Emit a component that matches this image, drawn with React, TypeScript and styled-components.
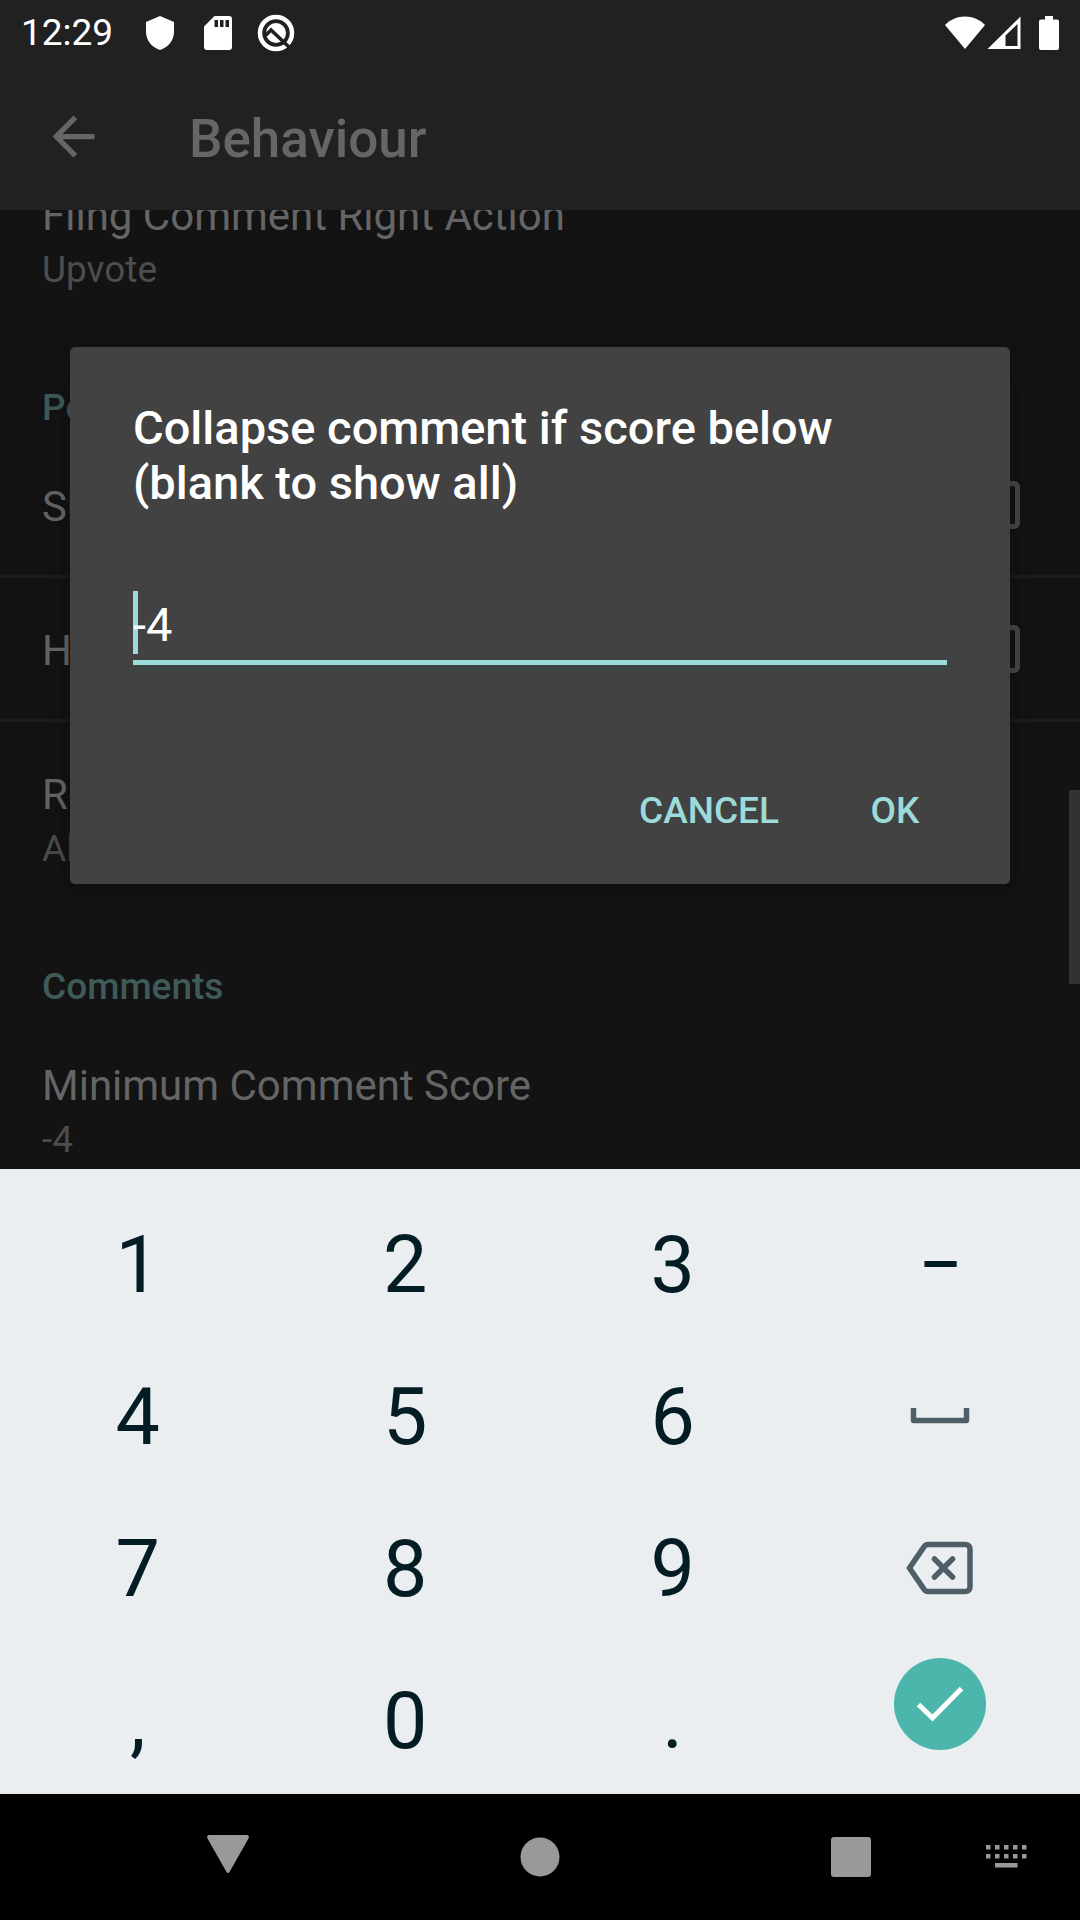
import React, { useState } from "react";
import styled, { createGlobalStyle } from "styled-components";

const accent = "#9cdbd9";

const GlobalStyle = createGlobalStyle`
  *, *::before, *::after { box-sizing: border-box; }
  body {
    margin: 0;
    background: #131313;
    font-family: Roboto, "Noto Sans", "Liberation Sans", sans-serif;
  }
  button {
    margin: 0;
    padding: 0;
    border: 0;
    background: none;
    color: inherit;
    font: inherit;
    cursor: pointer;
  }
  svg { display: block; flex: none; }
`;

const Screen = styled.div`
  display: flex;
  flex-direction: column;
  height: 100vh;
`;

const AppArea = styled.div`
  position: relative;
  flex: 1;
  min-height: 0;
  display: flex;
  flex-direction: column;
  background: #131313;
`;

const StatusBar = styled.header`
  flex: none;
  height: 63px;
  padding: 2px 21px 0;
  display: flex;
  align-items: center;
  justify-content: space-between;
  background: #212121;
  color: #fff;
  font-size: 37px;
  line-height: 43px;
`;

const StatusGroup = styled.div`
  display: flex;
  align-items: center;
  gap: 2px;
`;

const NotificationIcons = styled.div`
  display: grid;
  grid-template-columns: repeat(3, 58px);
  place-items: center;
  margin-left: 16px;
`;

const BatterySlot = styled.span`
  margin-left: 16px;
`;

const Toolbar = styled.div`
  flex: none;
  height: 147px;
  padding: 0 42px;
  display: flex;
  align-items: center;
  gap: 84px;
  background: #212121;
  color: #666;
`;

const ToolbarTitle = styled.h1`
  margin: 0;
  padding-top: 5px;
  font-size: 53px;
  line-height: 61px;
  font-weight: 500;
`;

const ListViewport = styled.main`
  position: relative;
  flex: 1;
  min-height: 0;
  overflow: hidden;
`;

/* The list is scrolled part of the way through its first row. */
const List = styled.div`
  margin-top: -67px;
`;

const ScrollThumb = styled.div`
  position: absolute;
  top: 580px;
  right: 0;
  width: 11px;
  height: 194px;
  background: #323232;
`;

const Category = styled.h2`
  margin: 0;
  padding: 53px 42px 5px;
  color: #3f5a59;
  font-size: 37px;
  line-height: 43px;
  font-weight: 500;
`;

const Preference = styled.div`
  padding: 48px 42px 42px;
  display: flex;
  flex-direction: column;
  gap: 8px;
`;

const PreferenceTitle = styled.span`
  color: #656565;
  font-size: 42px;
  line-height: 49px;
`;

const PreferenceSummary = styled.span`
  color: #4d4d4d;
  font-size: 37px;
  line-height: 43px;
`;

const CheckPreference = styled.label`
  height: 144px;
  padding: 0 60px 0 42px;
  display: flex;
  align-items: center;
  justify-content: space-between;
  border-bottom: 3px solid #1c1c1c;

  ${PreferenceTitle} { padding-top: 4px; }
`;

const Checkbox = styled.input`
  appearance: none;
  width: 48px;
  height: 48px;
  margin: 0;
  border: 5px solid #474747;
  border-radius: 6px;
`;

const DialogLayer = styled.div`
  position: absolute;
  inset: 0;
  padding: 61px 70px 0;
  display: flex;
  align-items: center;
`;

const Dialog = styled.form`
  flex: 1;
  padding: 53px 0 10px;
  border-radius: 5px;
  background: #424242;
  box-shadow: 0 16px 44px rgba(0, 0, 0, 0.18), 0 2px 10px rgba(0, 0, 0, 0.14);
`;

const DialogTitle = styled.label`
  display: block;
  padding: 0 63px;
  color: #fff;
  font-size: 47px;
  line-height: 55px;
  font-weight: 500;
`;

const Field = styled.div`
  position: relative;
  margin: 81px 63px 83px;
`;

const Caret = styled.span`
  position: absolute;
  top: 0;
  left: 0;
  width: 5px;
  height: 63px;
  background: ${accent};
`;

const ScoreInput = styled.input`
  position: relative;
  display: block;
  width: 100%;
  height: 74px;
  padding: 0 0 2px;
  border: 0;
  border-bottom: 5px solid ${accent};
  border-radius: 0;
  outline: 0;
  background: transparent;
  box-shadow: 0 5px 0 #3d4444;
  color: #fff;
  font-family: inherit;
  font-size: 47px;
  line-height: 55px;
  caret-color: transparent;
`;

const DialogActions = styled.div`
  padding-right: 31px;
  display: flex;
  justify-content: flex-end;
  gap: 11px;
`;

const ActionButton = styled.button`
  && {
    min-width: 168px;
    height: 126px;
    padding: 0 21px;
    color: ${accent};
    font-size: 37px;
    line-height: 43px;
    font-weight: 500;
  }
`;

const Keyboard = styled.section`
  flex: none;
  padding: 17px 6px 0 4px;
  display: grid;
  grid-template-columns: repeat(4, 1fr);
  grid-auto-rows: 152px;
  background: #eaeef1;
`;

const Key = styled.button`
  && {
    padding-top: 6px;
    display: flex;
    align-items: center;
    justify-content: center;
    color: #041c24;
    font-size: 79px;
    line-height: 93px;
  }
`;

const IconKey = styled(Key)`
  && {
    padding-top: 4px;
    color: #4e5f67;
  }
`;

const EnterKey = styled(Key)`
  && { padding: 0 0 28px; }
`;

const EnterDisc = styled.span`
  width: 92px;
  height: 92px;
  display: grid;
  place-items: center;
  border-radius: 50%;
  background: #4cb6ac;
`;

const NavBar = styled.nav`
  flex: none;
  height: 126px;
  display: grid;
  grid-template-columns: 146px 164px 1fr 164px 147px;
  background: #000;
  color: #999;
`;

const NavButton = styled.button<{ $column: number }>`
  grid-column: ${(p) => p.$column};
  display: grid;
  place-items: center;
`;

const ShieldIcon = () => (
  <svg width="28" height="34" viewBox="0 0 28 34" fill="currentColor" aria-hidden="true">
    <path d="M14 0 28 6v10c0 8.500-6 15.500-14 18C6 31.500 0 24.500 0 16V6z" />
  </svg>
);

const SdCardIcon = () => (
  <svg width="28" height="34" viewBox="0 0 28 34" aria-hidden="true">
    <path fill="currentColor" d="M10.500 0H25a3 3 0 0 1 3 3v28a3 3 0 0 1-3 3H3a3 3 0 0 1-3-3V10.500z" />
    <path fill="#212121" d="M10.500 4h3.500v7h-3.500zM16 4h3.500v7H16zM21.500 4H25v7h-3.500z" />
  </svg>
);

const QIcon = () => (
  <svg width="38" height="38" viewBox="0 0 38 38" fill="none" aria-hidden="true">
    <circle cx="19" cy="19" r="16" stroke="currentColor" strokeWidth="4.500" />
    <circle cx="19" cy="19" r="10" fill="currentColor" />
    <path d="m8.500 21.500 5.500-5.500 18 17" stroke="#212121" strokeWidth="3.500" />
  </svg>
);

const WifiIcon = () => (
  <svg width="40" height="34" viewBox="0 0 40 34" fill="currentColor" aria-hidden="true">
    <path d="M20 33 0 9C5.500 3.500 12 0.500 20 0.500S34.500 3.500 40 9z" />
  </svg>
);

const SignalIcon = () => (
  <svg width="34" height="34" viewBox="0 0 34 34" fill="currentColor" fillRule="evenodd" aria-hidden="true">
    <path d="M33.500 0.500v32.500H0.500zM30.500 8 18.500 19.500V30h12z" />
  </svg>
);

const BatteryIcon = () => (
  <svg width="20" height="34" viewBox="0 0 20 34" fill="currentColor" aria-hidden="true">
    <path d="M6 0h8v3.500h4a2 2 0 0 1 2 2V32a2 2 0 0 1-2 2H2a2 2 0 0 1-2-2V5.500a2 2 0 0 1 2-2h4z" />
  </svg>
);

const BackArrowIcon = () => (
  <svg width="63" height="63" viewBox="0 0 24 24" fill="currentColor" aria-hidden="true">
    <path d="M20 11H7.830l5.590-5.590L12 4l-8 8 8 8 1.410-1.410L7.830 13H20v-2z" />
  </svg>
);

const SpaceIcon = () => (
  <svg width="60" height="16" viewBox="0 0 60 16" fill="none" aria-hidden="true">
    <path d="M3.500 2.500v10h53V2.500" stroke="currentColor" strokeWidth="5.500" strokeLinecap="square" strokeLinejoin="round" />
  </svg>
);

const BackspaceIcon = () => (
  <svg width="68" height="54" viewBox="0 0 68 54" fill="none" stroke="currentColor" strokeWidth="5.500" aria-hidden="true">
    <path d="M22 3.500h37.500a4.500 4.500 0 0 1 4.500 4.500v38a4.500 4.500 0 0 1-4.500 4.500H22q-2.300 0-3.700-1.900L3.500 27 18.300 5.400Q19.700 3.500 22 3.500z" />
    <path d="m28.500 18 18 18m0-18-18 18" strokeLinecap="round" />
  </svg>
);

const CheckIcon = () => (
  <svg width="48" height="36" viewBox="0 0 48 36" fill="none" stroke="#fff" strokeWidth="5" aria-hidden="true">
    <path d="M2.500 18.500 16.500 32 45.500 2.500" />
  </svg>
);

const NavBackIcon = () => (
  <svg width="42" height="46" viewBox="0 0 42 46" fill="currentColor" aria-hidden="true">
    <path d="M1.500 1h39q2 1 1 3.500L22.500 38q-1.500 2-3 0L.5 4.500Q-.5 2 1.500 1z" />
  </svg>
);

const NavHomeIcon = () => (
  <svg width="40" height="40" viewBox="0 0 40 40" fill="currentColor" aria-hidden="true">
    <circle cx="20" cy="20" r="19.500" />
  </svg>
);

const NavRecentsIcon = () => (
  <svg width="40" height="40" viewBox="0 0 40 40" fill="currentColor" aria-hidden="true">
    <rect width="40" height="40" rx="3" />
  </svg>
);

const KeyboardIcon = () => (
  <svg width="41" height="24" viewBox="0 0 41 24" fill="currentColor" aria-hidden="true">
    {[0, 9].map((y) =>
      [0, 9, 18, 27, 36].map((x) => (
        <rect key={`${x}-${y}`} x={x} y={y} width="4.500" height="4.500" />
      ))
    )}
    <rect x="9" y="18" width="22.500" height="4.500" />
  </svg>
);

type CheckRowProps = { id: string; title: string };

const CheckRow = ({ id, title }: CheckRowProps) => (
  <CheckPreference htmlFor={id}>
    <PreferenceTitle>{title}</PreferenceTitle>
    <Checkbox id={id} type="checkbox" />
  </CheckPreference>
);

type PreferenceRowProps = { title: string; summary: string };

const PreferenceRow = ({ title, summary }: PreferenceRowProps) => (
  <Preference>
    <PreferenceTitle>{title}</PreferenceTitle>
    <PreferenceSummary>{summary}</PreferenceSummary>
  </Preference>
);

export default function App() {
  const [score, setScore] = useState("-4");
  const type = (text: string) => () => setScore((s) => s + text);
  const textKey = (text: string) => (
    <Key type="button" onClick={type(text)}>{text}</Key>
  );

  return (
    <>
      <GlobalStyle />
      <Screen>
        <AppArea>
          <StatusBar>
            <StatusGroup>
              <time>12:29</time>
              <NotificationIcons>
                <ShieldIcon />
                <SdCardIcon />
                <QIcon />
              </NotificationIcons>
            </StatusGroup>
            <StatusGroup>
              <WifiIcon />
              <SignalIcon />
              <BatterySlot><BatteryIcon /></BatterySlot>
            </StatusGroup>
          </StatusBar>
          <Toolbar>
            <button type="button" aria-label="Navigate up"><BackArrowIcon /></button>
            <ToolbarTitle>Behaviour</ToolbarTitle>
          </Toolbar>
          <ListViewport>
            <List>
              <PreferenceRow title="Fling Comment Right Action" summary="Upvote" />
              <Category>Posts</Category>
              <CheckRow id="show-read" title="Show Read" />
              <CheckRow id="hide-nsfw" title="Hide NSFW" />
              <PreferenceRow title="Row Style" summary="Always" />
              <Category>Comments</Category>
              <PreferenceRow title="Minimum Comment Score" summary="-4" />
            </List>
            <ScrollThumb />
          </ListViewport>
          <DialogLayer>
            <Dialog role="dialog" aria-modal="true" onSubmit={(e) => e.preventDefault()}>
              <DialogTitle htmlFor="score">Collapse comment if score below (blank to show all)</DialogTitle>
              <Field>
                <Caret />
                <ScoreInput id="score" type="text" value={score} onChange={(e) => setScore(e.target.value)} />
              </Field>
              <DialogActions>
                <ActionButton type="button">CANCEL</ActionButton>
                <ActionButton type="submit">OK</ActionButton>
              </DialogActions>
            </Dialog>
          </DialogLayer>
        </AppArea>
        <Keyboard aria-label="Keyboard">
          {textKey("1")}
          {textKey("2")}
          {textKey("3")}
          {textKey("−")}
          {textKey("4")}
          {textKey("5")}
          {textKey("6")}
          <IconKey type="button" aria-label="Space" onClick={type(" ")}><SpaceIcon /></IconKey>
          {textKey("7")}
          {textKey("8")}
          {textKey("9")}
          <IconKey type="button" aria-label="Backspace" onClick={() => setScore((s) => s.slice(0, -1))}>
            <BackspaceIcon />
          </IconKey>
          {textKey(",")}
          {textKey("0")}
          {textKey(".")}
          <EnterKey type="button" aria-label="Done">
            <EnterDisc><CheckIcon /></EnterDisc>
          </EnterKey>
        </Keyboard>
        <NavBar>
          <NavButton $column={2} type="button" aria-label="Back"><NavBackIcon /></NavButton>
          <NavButton $column={3} type="button" aria-label="Home"><NavHomeIcon /></NavButton>
          <NavButton $column={4} type="button" aria-label="Recents"><NavRecentsIcon /></NavButton>
          <NavButton $column={5} type="button" aria-label="Switch keyboard"><KeyboardIcon /></NavButton>
        </NavBar>
      </Screen>
    </>
  );
}
